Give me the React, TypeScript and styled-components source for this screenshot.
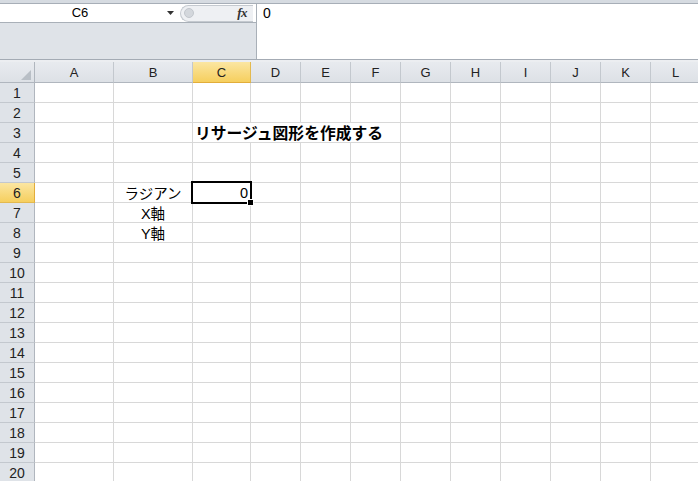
import React from 'react';
import styled, { createGlobalStyle, css } from 'styled-components';

const Global = createGlobalStyle`
  html, body { margin: 0; padding: 0; background: #fff; overflow: hidden; }
  #root { width: 698px; height: 481px; overflow: hidden; }
`;

const Window = styled.div`
  width: 698px;
  height: 481px;
  overflow: hidden;
  display: flex;
  flex-direction: column;
  font-family: "Liberation Sans", "Noto Sans CJK JP", sans-serif;
  color: #000;
  background: #fff;
`;

const TopStrip = styled.div`
  flex-shrink: 0;
  height: 3px;
  background: #d6dbe1;
  border-bottom: 1px solid #a7aeb7;
`;

const FormulaBar = styled.div`
  flex-shrink: 0;
  display: flex;
  height: 55px;
`;

const LeftPane = styled.div`
  width: 256px;
  display: flex;
  flex-direction: column;
  background: #dfe3e8;
`;

const NameRow = styled.div`
  height: 18px;
  display: flex;
  align-items: center;
  background: #fff;
  border-bottom: 1px solid #a9b0b8;
`;

const NameBox = styled.div`
  width: 160px;
  text-align: center;
  font-size: 13px;
  line-height: 18px;
`;

const ArrowBox = styled.div`
  width: 20px;
  height: 18px;
  display: flex;
  align-items: center;
  justify-content: center;
`;

const FxCapsule = styled.div`
  flex: 1;
  height: 17px;
  margin-right: 3px;
  display: flex;
  align-items: center;
  justify-content: space-between;
  background: #eef0f3;
  border: 1px solid #c4c9cf;
  border-right: none;
  border-radius: 9px 0 0 9px;
  box-sizing: border-box;
  padding: 0 6px 0 3px;
`;

const Knob = styled.div`
  width: 8px;
  height: 8px;
  border-radius: 50%;
  background: #d3d7dc;
  border: 1px solid #c2c7cd;
`;

const FxLabel = styled.span`
  font-family: "Liberation Serif", serif;
  font-style: italic;
  font-weight: bold;
  font-size: 13px;
  color: #333;
  letter-spacing: -0.5px;
`;

const GrayFill = styled.div`
  flex: 1;
  background: #dfe3e8;
`;

const FormulaInput = styled.div`
  flex: 1;
  background: #fff;
  border-left: 1px solid #a9b0b8;
  padding-left: 6px;
  font-size: 14px;
  line-height: 19px;
`;

const Divider = styled.div`
  flex-shrink: 0;
  height: 2px;
  border-top: 1px solid #a4abb4;
  background: #eceef1;
`;

const Sheet = styled.div`
  display: grid;
  grid-template-columns: 35px 79px 79px 58px repeat(9, 50px);
  grid-template-rows: 21px;
  grid-auto-rows: 20px;
  width: 701px;
`;

const headerBase = css`
  box-sizing: border-box;
  display: flex;
  align-items: center;
  justify-content: center;
  font-family: "Liberation Sans", sans-serif;
  color: #222;
`;

const ColHeader = styled.div<{ $active?: boolean }>`
  ${headerBase}
  font-size: 13px;
  padding-top: 1px;
  border-right: 1px solid #c3c8ce;
  border-bottom: 1px solid #b0b6be;
  background: ${(p) =>
    p.$active
      ? 'linear-gradient(#fbe6a2, #f8d97c 55%, #f6cf5e)'
      : 'linear-gradient(#e8ebef, #dde1e6)'};
  ${(p) => p.$active && css`border-bottom-color: #e2ad3a; border-right-color: #e3b94f;`}
`;

const Corner = styled.div`
  ${headerBase}
  border-right: 1px solid #b0b6be;
  border-bottom: 1px solid #b0b6be;
  background: linear-gradient(#e8ebef, #dde1e6);
  justify-content: flex-end;
  align-items: flex-end;
  padding: 0 3px 2px 0;
`;

const RowHeader = styled.div<{ $active?: boolean }>`
  ${headerBase}
  font-size: 14px;
  border-right: 1px solid #b0b6be;
  border-bottom: 1px solid #c3c8ce;
  background: ${(p) =>
    p.$active ? 'linear-gradient(#fbe6a2, #f8d97c 55%, #f6cf5e)' : '#dfe3e8'};
  ${(p) => p.$active && css`border-right-color: #e2ad3a; border-bottom-color: #e3b94f;`}
`;

const Cell = styled.div<{
  $align?: 'left' | 'center' | 'right';
  $bold?: boolean;
  $span?: number;
}>`
  box-sizing: border-box;
  position: relative;
  border-right: 1px solid #d8d8d8;
  border-bottom: 1px solid #d8d8d8;
  padding: 0 2px;
  display: flex;
  align-items: center;
  justify-content: ${(p) =>
    p.$align === 'right' ? 'flex-end' : p.$align === 'center' ? 'center' : 'flex-start'};
  font-family: "Liberation Sans", "Noto Sans CJK JP", sans-serif;
  font-size: ${(p) => (p.$bold ? '15.8px' : '14.5px')};
  font-weight: ${(p) => (p.$bold ? 700 : 400)};
  white-space: nowrap;
  ${(p) => p.$span && css`grid-column: span ${p.$span};`}
`;

const SelectionBox = styled.div`
  position: absolute;
  z-index: 2;
  top: -2px;
  left: -2px;
  right: -2px;
  bottom: -2px;
  border: 2px solid #000;
  pointer-events: none;
`;

const FillHandle = styled.div`
  position: absolute;
  right: -4px;
  bottom: -4px;
  width: 5px;
  height: 5px;
  background: #000;
  border: 1px solid #fff;
`;

const columns = ['A', 'B', 'C', 'D', 'E', 'F', 'G', 'H', 'I', 'J', 'K', 'L'];

type CellData = {
  text: string;
  align?: 'left' | 'center' | 'right';
  bold?: boolean;
  span?: number;
};

const data: Record<number, Record<string, CellData>> = {
  3: { C: { text: 'リサージュ図形を作成する', bold: true, span: 4 } },
  6: { B: { text: 'ラジアン', align: 'center' }, C: { text: '0', align: 'right' } },
  7: { B: { text: 'X軸', align: 'center' } },
  8: { B: { text: 'Y軸', align: 'center' } },
};

const activeCol = 'C';
const activeRow = 6;

export default function App() {
  const rows = Array.from({ length: 20 }, (_, i) => i + 1);
  return (
    <Window>
      <Global />
      <TopStrip />
      <FormulaBar>
        <LeftPane>
          <NameRow>
            <NameBox>C6</NameBox>
            <ArrowBox>
              <svg width="7" height="4" viewBox="0 0 7 4">
                <path d="M0 0 L7 0 L3.5 4 Z" fill="#333" />
              </svg>
            </ArrowBox>
            <FxCapsule>
              <Knob />
              <FxLabel>fx</FxLabel>
            </FxCapsule>
          </NameRow>
          <GrayFill />
        </LeftPane>
        <FormulaInput>0</FormulaInput>
      </FormulaBar>
      <Divider />
      <Sheet>
        <Corner>
          <svg width="10" height="10" viewBox="0 0 10 10">
            <path d="M10 0 L10 10 L0 10 Z" fill="#b9bfc6" />
          </svg>
        </Corner>
        {columns.map((c) => (
          <ColHeader key={c} $active={c === activeCol}>
            {c}
          </ColHeader>
        ))}
        {rows.map((r) => {
          const rowData = data[r] || {};
          const cells: React.ReactNode[] = [];
          let skip = 0;
          columns.forEach((c) => {
            if (skip > 0) {
              skip -= 1;
              return;
            }
            const d = rowData[c];
            const selected = r === activeRow && c === activeCol;
            if (d?.span) skip = d.span - 1;
            cells.push(
              <Cell key={c} $align={d?.align} $bold={d?.bold} $span={d?.span}>
                {d?.text}
                {selected && (
                  <SelectionBox>
                    <FillHandle />
                  </SelectionBox>
                )}
              </Cell>
            );
          });
          return (
            <React.Fragment key={r}>
              <RowHeader $active={r === activeRow}>{r}</RowHeader>
              {cells}
            </React.Fragment>
          );
        })}
      </Sheet>
    </Window>
  );
}
